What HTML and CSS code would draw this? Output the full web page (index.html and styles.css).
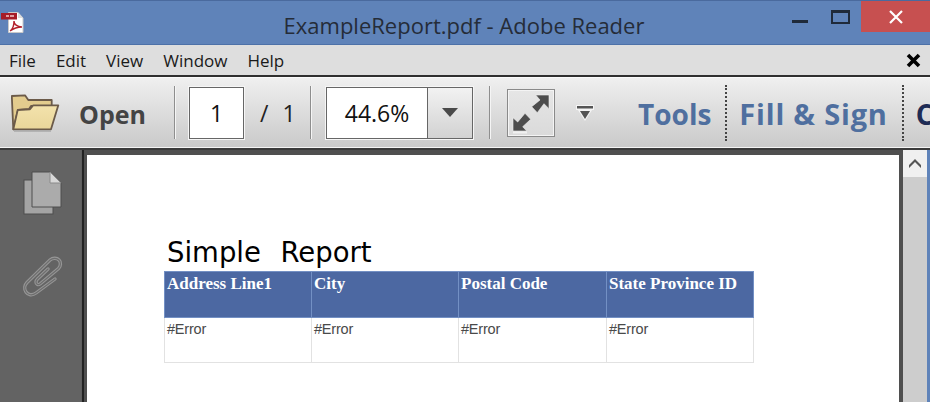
FILE: index.html
```html
<!DOCTYPE html>
<html lang="en">
<head>
<meta charset="utf-8">
<title>ExampleReport.pdf - Adobe Reader</title>
<link rel="stylesheet" href="styles.css">
</head>
<body>
<div class="app">
  <header class="titlebar">
    <svg class="appicon" width="24" height="32" viewBox="0 0 24 32">
      <path d="M8.500 2.500h9.500l5 5.500v14.500H8.500z" fill="#fff" stroke="#c9c9c9" stroke-width="1"/>
      <path d="M18 2.500l5 5.500h-5z" fill="#ddd"/>
      <rect x="1" y="3" width="16" height="6.500" fill="#a61c28"/>
      <path d="M6 6h3M10 6h4" stroke="#f3c9c9" stroke-width="1.500"/>
      <path d="M10 21c3-2 4-6 4-10 0 3 3 6 8 6-4 0-8 1-12 4z" fill="none" stroke="#b3202c" stroke-width="1.400"/>
    </svg>
    <h1 class="wintitle">ExampleReport.pdf - Adobe Reader</h1>
    <div class="winbtns">
      <span class="winbtn winbtn-min"><svg width="18" height="6" viewBox="0 0 18 6"><rect x="1" y="1" width="16" height="3" fill="#1f2a3a"/></svg></span>
      <span class="winbtn"><svg width="20" height="16" viewBox="0 0 20 16"><rect x="2" y="2" width="17" height="12" fill="none" stroke="#1f2a3a" stroke-width="2"/><rect x="1" y="1" width="19" height="3" fill="#1f2a3a"/></svg></span>
      <span class="winclose"><svg width="16" height="14" viewBox="0 0 16 14"><path d="M2 1l12 12M14 1L2 13" stroke="#fff" stroke-width="2.200"/></svg></span>
    </div>
  </header>
  <nav class="menubar">
    <span class="menuitem">File</span>
    <span class="menuitem">Edit</span>
    <span class="menuitem">View</span>
    <span class="menuitem">Window</span>
    <span class="menuitem">Help</span>
    <svg class="menuclose" width="15" height="15" viewBox="0 0 15 15"><path d="M2 2l11 11M13 2L2 13" stroke="#000" stroke-width="3.600"/></svg>
  </nav>
  <div class="toolbar">
    <svg class="foldericon" width="50" height="40" viewBox="0 0 50 40">
      <defs>
        <linearGradient id="foldfront" x1="0" y1="0" x2="0" y2="1">
          <stop offset="0" stop-color="#f3e2ac"/>
          <stop offset="1" stop-color="#e9d69a"/>
        </linearGradient>
      </defs>
      <path d="M2.300 36.300L0.800 3l13.200-.7L17.300 7h23.400v6H20L18 16 7 17z" fill="#e3cc8e" stroke="#6b5a49" stroke-width="1.800" stroke-linejoin="round"/>
      <path d="M6.700 17L19 16.300l3.300-4h25L40 36.300H2.300z" fill="url(#foldfront)" stroke="#6b5a49" stroke-width="1.800" stroke-linejoin="round"/>
      <path d="M3 38h37" stroke="#a8a8a8" stroke-width="1.500"/>
    </svg>
    <span class="opentext">Open</span>
    <span class="sep sep-open"></span>
    <span class="pagebox">1</span>
    <span class="pagetotal"><i class="slash">/</i> 1</span>
    <span class="sep sep-page"></span>
    <div class="zoombox">
      <span class="zoomval">44.6%</span>
      <span class="zoomdrop"><svg width="16" height="9" viewBox="0 0 16 9"><path d="M0 0h16L8 9z" fill="#4a4a4a"/></svg></span>
    </div>
    <span class="sep sep-zoom"></span>
    <span class="fitbtn">
      <svg width="46" height="46" viewBox="0 0 46 46">
        <path d="M27.700 5H41v13.700l-5-5-6.700 9-5.600-6L32 10z" fill="#4d4d4d" stroke="#f4f4f4" stroke-width="0.600"/>
        <path d="M5 41V27.700l4.700 4.300 7.300-8.700 5.700 6-8 7.400 4 4.300z" fill="#4d4d4d" stroke="#f4f4f4" stroke-width="0.600"/>
        <rect x="5" y="41.500" width="14" height="2" fill="#f0f0f0"/>
      </svg>
    </span>
    <svg class="moreicon" width="18" height="16" viewBox="0 0 18 16">
      <rect x="0" y="0" width="18" height="5" fill="#f5f5f5"/>
      <rect x="1" y="1" width="16" height="2.500" fill="#555"/>
      <path d="M2 5h14l-7 11z" fill="#f5f5f5"/>
      <path d="M4 6h10l-5 8z" fill="#555"/>
    </svg>
    <span class="tab tab-tools">Tools</span>
    <span class="dots dots-first"></span>
    <span class="tab tab-fill">Fill &amp; Sign</span>
    <span class="dots"></span>
    <span class="tab tab-cut">C</span>
  </div>
  <main class="workspace">
    <aside class="sidebar">
      <svg class="sideicon" width="40" height="46" viewBox="0 0 40 46">
        <rect x="1" y="9" width="29" height="34" fill="#a4a4a4" stroke="#4e4e4e"/>
        <path d="M9 1h18l11 11v24H9z" fill="#ababab" stroke="#4e4e4e"/>
        <path d="M27 1v11h11z" fill="#d8d8d8" stroke="#8a8a8a"/>
      </svg>
      <svg class="clipicon" width="55" height="55" viewBox="0 0 55 55">
        <path d="M38 32L19 46c-4 3-8 2-10-1s-1.500-7 1-9.500L33 13c3-2.500 7-2 9 0s2 6-.5 8.500L23 37c-2 1.500-4 0-4-2 0-1 .5-2 1.500-3L31 22" fill="none" stroke="#969696" stroke-width="3.400" stroke-linecap="round"/>
        <path d="M38 32L19 46c-4 3-8 2-10-1s-1.500-7 1-9.500L33 13c3-2.500 7-2 9 0s2 6-.5 8.500L23 37c-2 1.500-4 0-4-2 0-1 .5-2 1.500-3L31 22" fill="none" stroke="#6e6e6e" stroke-width="1.200" stroke-linecap="round"/>
      </svg>
    </aside>
    <div class="canvas">
      <section class="page">
        <h2 class="reporttitle">Simple&nbsp; Report</h2>
        <table class="report">
          <thead>
            <tr><th class="c1">Address Line1</th><th class="c2">City</th><th class="c3">Postal Code</th><th class="c4">State Province ID</th></tr>
          </thead>
          <tbody>
            <tr><td>#Error</td><td>#Error</td><td>#Error</td><td>#Error</td></tr>
          </tbody>
        </table>
      </section>
    </div>
    <div class="scrollbar">
      <span class="scrollup"><svg width="12" height="9" viewBox="0 0 12 9"><path d="M0 6l6-6 6 6v3L6 3 0 9z" fill="#555"/></svg></span>
      <span class="scrolltrack"></span>
    </div>
  </main>
</div>
</body>
</html>
```
FILE: styles.css
```css
* { box-sizing: border-box; }
html, body { margin: 0; height: 100%; }
body { overflow: hidden; background: #fff; }
.app {
  width: 930px;
  height: 402px;
  display: flex;
  flex-direction: column;
  overflow: hidden;
  font-family: "Open Sans", "Noto Sans", sans-serif;
}
.titlebar {
  height: 45px;
  flex: none;
  display: flex;
  position: relative;
  align-items: flex-start;
  justify-content: center;
  background: #5f83b9;
  border-top: 1px solid #4a6a9e;
  border-bottom: 1px solid #4d71a8;
}
.appicon { position: absolute; left: 0; top: 9px; }
.wintitle {
  margin: 9px 0 0 -2px;
  font-size: 22px;
  line-height: 30px;
  font-weight: 400;
  color: #252c38;
}
.winbtns {
  position: absolute;
  right: 0;
  top: 0;
  display: flex;
  align-items: flex-start;
}
.winbtn {
  width: 40px;
  height: 31px;
  display: flex;
  align-items: center;
  justify-content: center;
}
.winbtn-min { padding-top: 10px; }
.winclose {
  width: 69px;
  height: 31px;
  margin-left: 1px;
  background: #c75050;
  display: flex;
  align-items: center;
  justify-content: center;
}
.menubar {
  height: 30px;
  flex: none;
  display: flex;
  align-items: center;
  gap: 20px;
  padding: 1px 9px 0 9px;
  background: #dedede;
  font-size: 17px;
  color: #1a1a1a;
}
.menuitem { line-height: 22px; }
.menuclose { margin-left: auto; margin-right: 0; }
.toolbar {
  height: 75px;
  flex: none;
  display: flex;
  align-items: center;
  overflow: hidden;
  padding-left: 11px;
  background: linear-gradient(#f0f0f0, #c9c9c9);
  border-top: 2px solid #2f2f2f;
  border-bottom: 2px solid #3a3a3a;
  box-shadow: inset 0 1px 0 #fafafa, inset 0 -1px 0 #f4f4f4;
}
.foldericon { flex: none; }
.opentext {
  flex: none;
  margin: 2px 0 0 18px;
  font-size: 25px;
  font-weight: 700;
  color: #444;
  width: 66px;
}
.sep {
  width: 2px;
  height: 53px;
  flex: none;
  background: #8e8e8e;
  border-right: 1px solid #f5f5f5;
}
.sep-open { margin-left: 29px; }
.pagebox {
  width: 55px;
  height: 52px;
  margin-left: 13px;
  flex: none;
  display: flex;
  align-items: center;
  justify-content: center;
  background: #fff;
  border: 1px solid #666;
  outline: 1px solid #f6f6f6;
  font-size: 23px;
  color: #111;
}
.pagetotal {
  flex: none;
  width: 66px;
  padding-left: 16px;
  font-size: 23px;
  color: #222;
  white-space: nowrap;
}
.slash { font-style: normal; margin-right: 8px; }
.sep-page { margin-left: 0; }
.zoombox {
  width: 147px;
  height: 52px;
  margin-left: 14px;
  flex: none;
  display: flex;
  background: #fff;
  border: 1px solid #666;
  outline: 1px solid #f6f6f6;
}
.zoomval {
  width: 101px;
  display: flex;
  align-items: center;
  justify-content: center;
  font-size: 23px;
  color: #111;
  border-right: 1px solid #666;
}
.zoomdrop {
  flex: 1;
  display: flex;
  align-items: center;
  justify-content: center;
  background: linear-gradient(#f2f2f2, #d2d2d2);
}
.sep-zoom { margin-left: 16px; }
.fitbtn {
  width: 48px;
  height: 48px;
  margin-left: 16px;
  flex: none;
  display: flex;
  align-items: center;
  justify-content: center;
  background: linear-gradient(#e6e6e6, #dadada);
  border: 1px solid #8a8a8a;
  box-shadow: inset 0 0 0 1px #f4f4f4;
}
.moreicon { margin-left: 21px; flex: none; }
.tab {
  flex: none;
  margin-top: 2px;
  font-size: 28px;
  font-weight: 700;
  color: #4f6f9f;
  white-space: nowrap;
}
.tab-tools { margin-left: 44px; }
.tab-fill { margin-left: 12px; margin-right: 14px; font-size: 29px; letter-spacing: 0.8px; }
.tab-cut { margin-left: 12px; color: #1e2c55; }
.dots-first { margin-left: 14px; }
.dots {
  width: 2px;
  height: 56px;
  flex: none;
  border-left: 2px dotted #444;
}
.workspace {
  flex: 1;
  min-height: 0;
  display: flex;
  background: #4f4f4f;
}
.sidebar {
  width: 82px;
  flex: none;
  display: flex;
  flex-direction: column;
  align-items: flex-start;
  padding: 21px 0 0 23px;
  gap: 30px;
  background: #636363;
  border-right: 1px solid #5e5e5e;
}
.clipicon { margin-left: -6px; }
.canvas {
  width: 821px;
  flex: none;
  border-left: 2px solid #222;
  padding: 5px 4px 0 3px;
}
.page {
  width: 812px;
  height: 260px;
  background: #fff;
  padding: 78px 0 0 77px;
}
.reporttitle {
  margin: 0 0 0 3px;
  height: 38px;
  font: 400 27.500px/39px "DejaVu Sans", sans-serif;
  word-spacing: 1px;
  color: #000;
}
.report {
  width: 590px;
  table-layout: fixed;
  border-collapse: collapse;
}
.report th {
  height: 46px;
  padding: 2px 2px 0 2px;
  vertical-align: top;
  text-align: left;
  background: #4c68a2;
  border: 1px solid #7390c4;
  color: #fff;
  font: 700 17px/20px "Liberation Serif", serif;
  white-space: nowrap;
}
.report td {
  height: 45px;
  padding: 1px 2px 0 2px;
  vertical-align: top;
  border: 1px solid #e2e2e2;
  color: #4a4a4a;
  font: 400 14.500px/20px "Liberation Sans", sans-serif;
  letter-spacing: -0.2px;
}
.c1 { width: 147px; }
.c2 { width: 147px; }
.c3 { width: 148px; }
.scrollbar {
  width: 24px;
  margin-right: 3px;
  flex: none;
  display: flex;
  flex-direction: column;
  background: #cdcdcd;
  box-shadow: 3px 0 0 #5f83b9;
}
.scrollup {
  height: 27px;
  flex: none;
  display: flex;
  align-items: center;
  justify-content: center;
  background: #f0f0f0;
}
.scrolltrack { flex: 1; }
```
